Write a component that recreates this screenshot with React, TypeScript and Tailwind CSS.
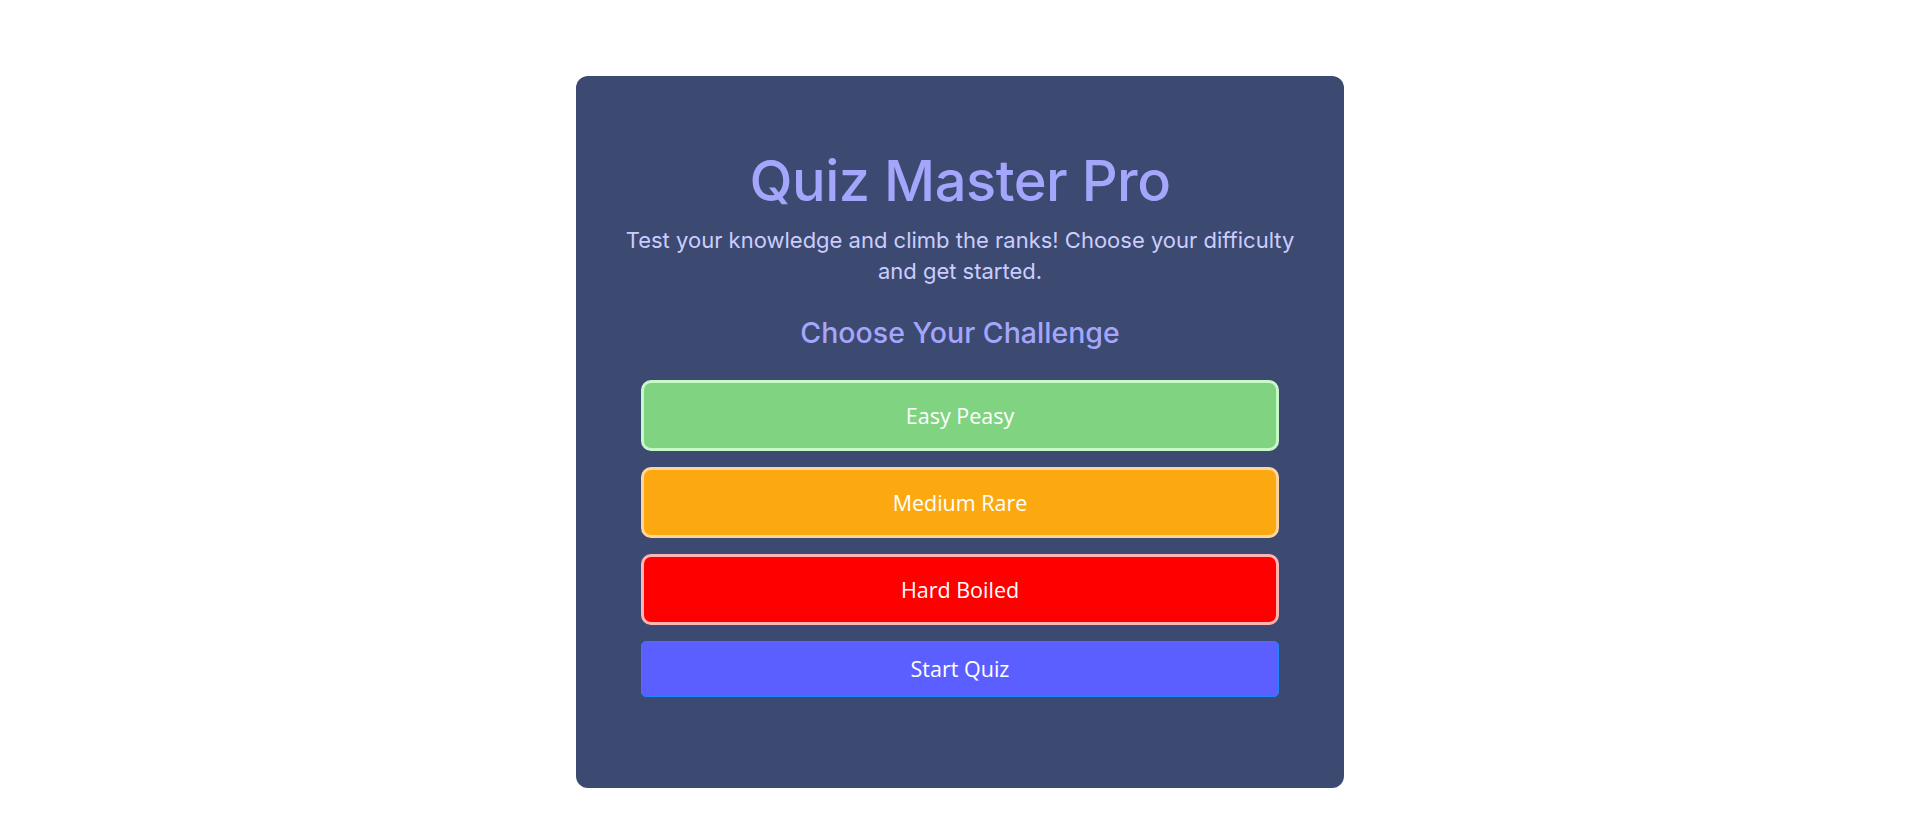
import React, { useState } from 'react';

type Level = 'easy' | 'medium' | 'hard';

const levels: { id: Level; label: string; className: string }[] = [
  { id: 'easy', label: 'Easy Peasy', className: 'bg-[#80d381] border-[#c8f7c8]' },
  { id: 'medium', label: 'Medium Rare', className: 'bg-[#fca911] border-[#fed59c]' },
  { id: 'hard', label: 'Hard Boiled', className: 'bg-[#ff0000] border-[#ffb4b4]' },
];

const App: React.FC = () => {
  const [level, setLevel] = useState<Level | null>(null);

  return (
    <div className="min-h-screen w-full bg-white pt-[76px] font-['Inter',sans-serif]">
      <div className="mx-auto flex h-[712px] w-[768px] flex-col items-center rounded-[12px] bg-[#3c4970] px-[65px] pt-[72px]">
        <h1 className="text-[56px] leading-[1.2] font-medium text-[#a4a6fc] tracking-[-0.5px]">
          Quiz Master Pro
        </h1>
        <p className="mt-[10px] text-center text-[22px] leading-[31px] text-[#cbcdff] whitespace-nowrap">
          Test your knowledge and climb the ranks! Choose your difficulty
          <br />
          and get started.
        </p>
        <h2 className="mt-[29px] text-[28.5px] leading-[1.2] font-medium text-[#a4a6fc]">
          Choose Your Challenge
        </h2>

        <div className="mt-[30px] flex w-full flex-col gap-4">
          {levels.map((l) => (
            <button
              key={l.id}
              onClick={() => setLevel(l.id)}
              className={
                'flex h-[71px] w-full items-center justify-center rounded-[10px] border-[3px] font-["Open_Sans",sans-serif] text-[21.5px] text-white ' +
                l.className +
                (level === l.id ? ' brightness-110' : '')
              }
            >
              {l.label}
            </button>
          ))}
          <button className="flex h-[56px] w-full items-center justify-center rounded-[5px] border border-[#1f86ff] bg-[#5c5fff] font-['Open_Sans',sans-serif] text-[21.5px] text-white">
            Start Quiz
          </button>
        </div>
      </div>
    </div>
  );
};

export default App;
